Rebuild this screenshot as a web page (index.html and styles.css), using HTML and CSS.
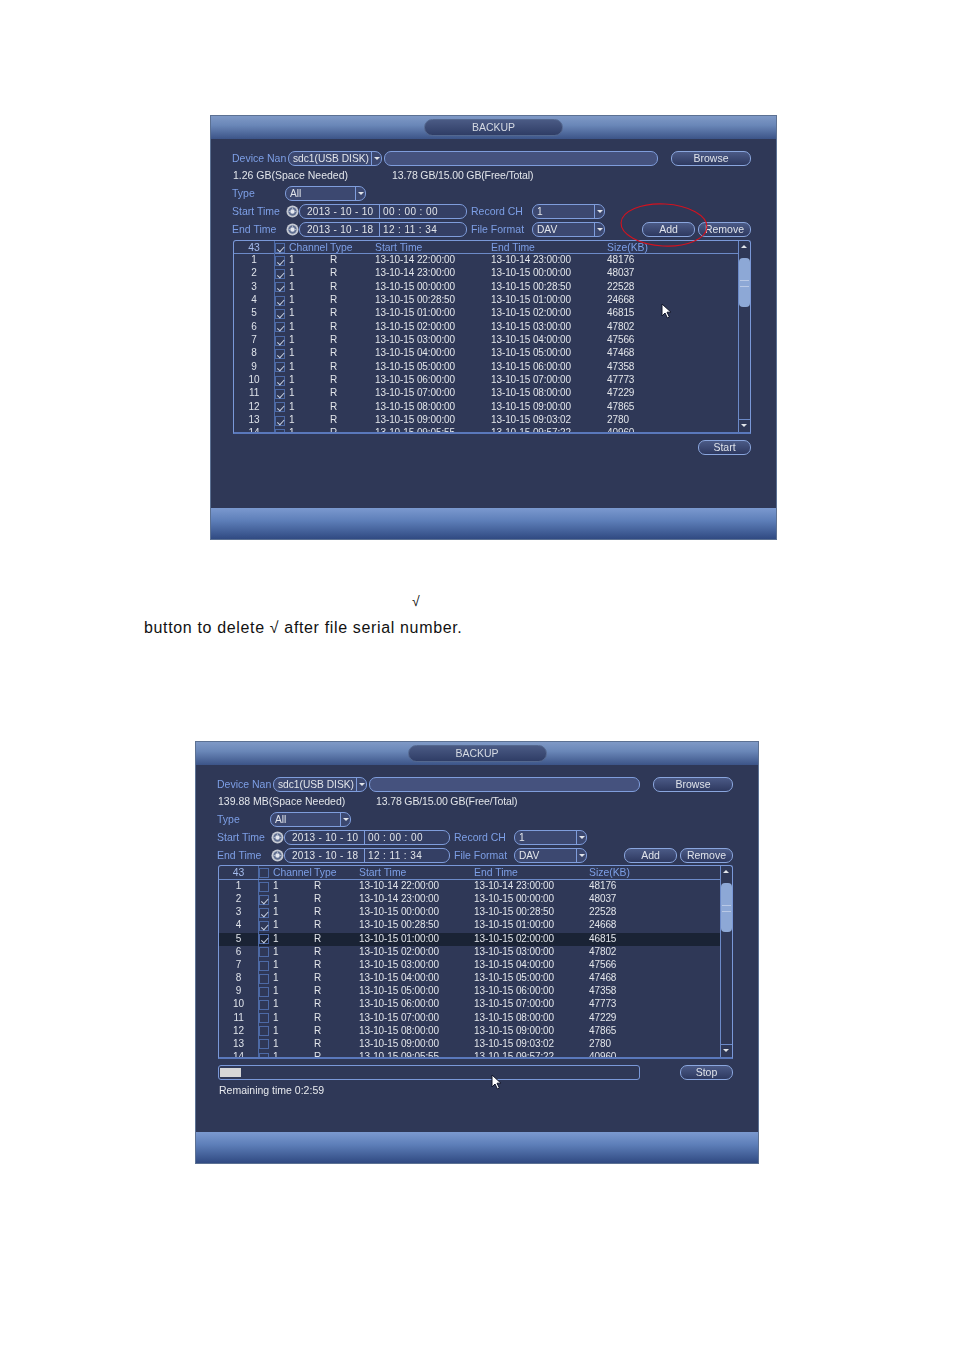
FILE: index.html
```html
<!DOCTYPE html>
<html lang="en">
<head>
<meta charset="UTF-8" />
<title>Backup</title>
<link rel="stylesheet" href="styles.css">
</head>
<body>

<section class="dialog dialog-add">
  <header class="title-bar"><span class="title-pill">BACKUP</span></header>
  <div class="panel">
    <div class="row">
      <span class="label label-device">Device Nan</span>
      <span class="field select select-device"><span class="value">sdc1(USB DISK)</span><i class="drop"></i></span>
      <span class="field path"></span>
      <button class="btn btn-browse">Browse</button>
    </div>
    <div class="row row-info">
      <span class="info-needed">1.26 GB(Space Needed)</span>
      <span class="info-free">13.78 GB/15.00 GB(Free/Total)</span>
    </div>
    <div class="row">
      <span class="label label-type">Type</span>
      <span class="field select select-type"><span class="value">All</span><i class="drop"></i></span>
    </div>
    <div class="row">
      <span class="label label-time">Start Time</span>
      <svg class="clock" width="13" height="13" viewBox="0 0 13 13"><circle cx="6.500" cy="6.500" r="6" fill="#c6cad3"/><circle cx="6.500" cy="6.500" r="4.200" fill="#5f6e90"/><circle cx="6.500" cy="6.500" r="2.200" fill="#e4e7ee"/><path d="M6.500 2.500v2M2.500 6.500h2M10.500 6.500h-2" stroke="#a9b2c6"/></svg>
      <span class="field datetime"><span class="date">2013 - 10 - 10</span><span class="time">00 : 00 : 00</span></span>
      <span class="label label-record">Record CH</span>
      <span class="field select select-record"><span class="value">1</span><i class="drop"></i></span>
    </div>
    <div class="row">
      <span class="label label-time">End Time</span>
      <svg class="clock" width="13" height="13" viewBox="0 0 13 13"><circle cx="6.500" cy="6.500" r="6" fill="#c6cad3"/><circle cx="6.500" cy="6.500" r="4.200" fill="#5f6e90"/><circle cx="6.500" cy="6.500" r="2.200" fill="#e4e7ee"/><path d="M6.500 2.500v2M2.500 6.500h2M10.500 6.500h-2" stroke="#a9b2c6"/></svg>
      <span class="field datetime"><span class="date">2013 - 10 - 18</span><span class="time">12 : 11 : 34</span></span>
      <span class="label label-record">File Format</span>
      <span class="field select select-record"><span class="value">DAV</span><i class="drop"></i></span>
      <button class="btn btn-add">Add</button>
      <button class="btn btn-remove">Remove</button>
    </div>

    <div class="file-table">
      <div class="file-list">
        <div class="file-row file-head"><span class="num">43</span><span class="tick"><i class="check on"></i></span><span>Channel</span><span class="type">Type</span><span>Start Time</span><span>End Time</span><span>Size(KB)</span></div>
        <div class="file-row"><span class="num">1</span><span class="tick"><i class="check on"></i></span><span>1</span><span class="type">R</span><span>13-10-14 22:00:00</span><span>13-10-14 23:00:00</span><span>48176</span></div>
        <div class="file-row"><span class="num">2</span><span class="tick"><i class="check on"></i></span><span>1</span><span class="type">R</span><span>13-10-14 23:00:00</span><span>13-10-15 00:00:00</span><span>48037</span></div>
        <div class="file-row"><span class="num">3</span><span class="tick"><i class="check on"></i></span><span>1</span><span class="type">R</span><span>13-10-15 00:00:00</span><span>13-10-15 00:28:50</span><span>22528</span></div>
        <div class="file-row"><span class="num">4</span><span class="tick"><i class="check on"></i></span><span>1</span><span class="type">R</span><span>13-10-15 00:28:50</span><span>13-10-15 01:00:00</span><span>24668</span></div>
        <div class="file-row"><span class="num">5</span><span class="tick"><i class="check on"></i></span><span>1</span><span class="type">R</span><span>13-10-15 01:00:00</span><span>13-10-15 02:00:00</span><span>46815</span></div>
        <div class="file-row"><span class="num">6</span><span class="tick"><i class="check on"></i></span><span>1</span><span class="type">R</span><span>13-10-15 02:00:00</span><span>13-10-15 03:00:00</span><span>47802</span></div>
        <div class="file-row"><span class="num">7</span><span class="tick"><i class="check on"></i></span><span>1</span><span class="type">R</span><span>13-10-15 03:00:00</span><span>13-10-15 04:00:00</span><span>47566</span></div>
        <div class="file-row"><span class="num">8</span><span class="tick"><i class="check on"></i></span><span>1</span><span class="type">R</span><span>13-10-15 04:00:00</span><span>13-10-15 05:00:00</span><span>47468</span></div>
        <div class="file-row"><span class="num">9</span><span class="tick"><i class="check on"></i></span><span>1</span><span class="type">R</span><span>13-10-15 05:00:00</span><span>13-10-15 06:00:00</span><span>47358</span></div>
        <div class="file-row"><span class="num">10</span><span class="tick"><i class="check on"></i></span><span>1</span><span class="type">R</span><span>13-10-15 06:00:00</span><span>13-10-15 07:00:00</span><span>47773</span></div>
        <div class="file-row"><span class="num">11</span><span class="tick"><i class="check on"></i></span><span>1</span><span class="type">R</span><span>13-10-15 07:00:00</span><span>13-10-15 08:00:00</span><span>47229</span></div>
        <div class="file-row"><span class="num">12</span><span class="tick"><i class="check on"></i></span><span>1</span><span class="type">R</span><span>13-10-15 08:00:00</span><span>13-10-15 09:00:00</span><span>47865</span></div>
        <div class="file-row"><span class="num">13</span><span class="tick"><i class="check on"></i></span><span>1</span><span class="type">R</span><span>13-10-15 09:00:00</span><span>13-10-15 09:03:02</span><span>2780</span></div>
        <div class="file-row"><span class="num">14</span><span class="tick"><i class="check on"></i></span><span>1</span><span class="type">R</span><span>13-10-15 09:05:55</span><span>13-10-15 09:57:22</span><span>40960</span></div>
      </div>
      <div class="scrollbar">
        <span class="arrow arrow-up"></span>
        <div class="track"><div class="thumb"></div></div>
        <span class="arrow arrow-down"></span>
      </div>
    </div>

    <div class="row row-action">
      <button class="btn btn-action">Start</button>
    </div>
  </div>
  <footer class="foot-bar"></footer>

  <svg class="red-ring" width="92" height="48" viewBox="0 0 92 48"><ellipse cx="46" cy="24" rx="43" ry="21" transform="rotate(3 46 24)" fill="none" stroke="#d3121f" stroke-width="1.1"/></svg>
  <svg class="pointer" width="12" height="16" viewBox="0 0 12 16"><path d="M1 1v12l3-3 2.400 5 2-1-2.400-4.800h4z" fill="#fff" stroke="#10152a"/></svg>
</section>

<p class="doc-tick">√</p>
<p class="doc-line">button to delete √ after file serial number.</p>

<section class="dialog dialog-run">
  <header class="title-bar"><span class="title-pill">BACKUP</span></header>
  <div class="panel">
    <div class="row">
      <span class="label label-device">Device Nan</span>
      <span class="field select select-device"><span class="value">sdc1(USB DISK)</span><i class="drop"></i></span>
      <span class="field path"></span>
      <button class="btn btn-browse">Browse</button>
    </div>
    <div class="row row-info">
      <span class="info-needed">139.88 MB(Space Needed)</span>
      <span class="info-free">13.78 GB/15.00 GB(Free/Total)</span>
    </div>
    <div class="row">
      <span class="label label-type">Type</span>
      <span class="field select select-type"><span class="value">All</span><i class="drop"></i></span>
    </div>
    <div class="row">
      <span class="label label-time">Start Time</span>
      <svg class="clock" width="13" height="13" viewBox="0 0 13 13"><circle cx="6.500" cy="6.500" r="6" fill="#c6cad3"/><circle cx="6.500" cy="6.500" r="4.200" fill="#5f6e90"/><circle cx="6.500" cy="6.500" r="2.200" fill="#e4e7ee"/><path d="M6.500 2.500v2M2.500 6.500h2M10.500 6.500h-2" stroke="#a9b2c6"/></svg>
      <span class="field datetime"><span class="date">2013 - 10 - 10</span><span class="time">00 : 00 : 00</span></span>
      <span class="label label-record">Record CH</span>
      <span class="field select select-record"><span class="value">1</span><i class="drop"></i></span>
    </div>
    <div class="row">
      <span class="label label-time">End Time</span>
      <svg class="clock" width="13" height="13" viewBox="0 0 13 13"><circle cx="6.500" cy="6.500" r="6" fill="#c6cad3"/><circle cx="6.500" cy="6.500" r="4.200" fill="#5f6e90"/><circle cx="6.500" cy="6.500" r="2.200" fill="#e4e7ee"/><path d="M6.500 2.500v2M2.500 6.500h2M10.500 6.500h-2" stroke="#a9b2c6"/></svg>
      <span class="field datetime"><span class="date">2013 - 10 - 18</span><span class="time">12 : 11 : 34</span></span>
      <span class="label label-record">File Format</span>
      <span class="field select select-record"><span class="value">DAV</span><i class="drop"></i></span>
      <button class="btn btn-add">Add</button>
      <button class="btn btn-remove">Remove</button>
    </div>

    <div class="file-table">
      <div class="file-list">
        <div class="file-row file-head"><span class="num">43</span><span class="tick"><i class="check"></i></span><span>Channel</span><span class="type">Type</span><span>Start Time</span><span>End Time</span><span>Size(KB)</span></div>
        <div class="file-row"><span class="num">1</span><span class="tick"><i class="check"></i></span><span>1</span><span class="type">R</span><span>13-10-14 22:00:00</span><span>13-10-14 23:00:00</span><span>48176</span></div>
        <div class="file-row"><span class="num">2</span><span class="tick"><i class="check on"></i></span><span>1</span><span class="type">R</span><span>13-10-14 23:00:00</span><span>13-10-15 00:00:00</span><span>48037</span></div>
        <div class="file-row"><span class="num">3</span><span class="tick"><i class="check on"></i></span><span>1</span><span class="type">R</span><span>13-10-15 00:00:00</span><span>13-10-15 00:28:50</span><span>22528</span></div>
        <div class="file-row"><span class="num">4</span><span class="tick"><i class="check on"></i></span><span>1</span><span class="type">R</span><span>13-10-15 00:28:50</span><span>13-10-15 01:00:00</span><span>24668</span></div>
        <div class="file-row selected"><span class="num">5</span><span class="tick"><i class="check on"></i></span><span>1</span><span class="type">R</span><span>13-10-15 01:00:00</span><span>13-10-15 02:00:00</span><span>46815</span></div>
        <div class="file-row"><span class="num">6</span><span class="tick"><i class="check"></i></span><span>1</span><span class="type">R</span><span>13-10-15 02:00:00</span><span>13-10-15 03:00:00</span><span>47802</span></div>
        <div class="file-row"><span class="num">7</span><span class="tick"><i class="check"></i></span><span>1</span><span class="type">R</span><span>13-10-15 03:00:00</span><span>13-10-15 04:00:00</span><span>47566</span></div>
        <div class="file-row"><span class="num">8</span><span class="tick"><i class="check"></i></span><span>1</span><span class="type">R</span><span>13-10-15 04:00:00</span><span>13-10-15 05:00:00</span><span>47468</span></div>
        <div class="file-row"><span class="num">9</span><span class="tick"><i class="check"></i></span><span>1</span><span class="type">R</span><span>13-10-15 05:00:00</span><span>13-10-15 06:00:00</span><span>47358</span></div>
        <div class="file-row"><span class="num">10</span><span class="tick"><i class="check"></i></span><span>1</span><span class="type">R</span><span>13-10-15 06:00:00</span><span>13-10-15 07:00:00</span><span>47773</span></div>
        <div class="file-row"><span class="num">11</span><span class="tick"><i class="check"></i></span><span>1</span><span class="type">R</span><span>13-10-15 07:00:00</span><span>13-10-15 08:00:00</span><span>47229</span></div>
        <div class="file-row"><span class="num">12</span><span class="tick"><i class="check"></i></span><span>1</span><span class="type">R</span><span>13-10-15 08:00:00</span><span>13-10-15 09:00:00</span><span>47865</span></div>
        <div class="file-row"><span class="num">13</span><span class="tick"><i class="check"></i></span><span>1</span><span class="type">R</span><span>13-10-15 09:00:00</span><span>13-10-15 09:03:02</span><span>2780</span></div>
        <div class="file-row"><span class="num">14</span><span class="tick"><i class="check"></i></span><span>1</span><span class="type">R</span><span>13-10-15 09:05:55</span><span>13-10-15 09:57:22</span><span>40960</span></div>
      </div>
      <div class="scrollbar">
        <span class="arrow arrow-up"></span>
        <div class="track"><div class="thumb"></div></div>
        <span class="arrow arrow-down"></span>
      </div>
    </div>

    <div class="row row-action">
      <div class="progress"><div class="progress-fill"></div></div>
      <button class="btn btn-action">Stop</button>
    </div>
    <div class="remaining">Remaining time 0:2:59</div>
  </div>
  <footer class="foot-bar"></footer>

  <svg class="pointer" width="12" height="16" viewBox="0 0 12 16"><path d="M1 1v12l3-3 2.400 5 2-1-2.400-4.800h4z" fill="#fff" stroke="#10152a"/></svg>
</section>

</body>
</html>
```

FILE: styles.css
```css
* {
  box-sizing: border-box;
}
body {
  margin: 0;
  background: #fff;
  color: #111;
  font-family: "Liberation Sans", Arial, sans-serif;
}
.dialog {
  position: relative;
  display: flex;
  flex-direction: column;
  border: 1px solid #5c7193;
  background: #2f3857;
  color: #e2e5ea;
  font-size: 10.5px;
  filter: blur(0.3px);
}
.dialog-add {
  width: 567px;
  height: 425px;
  margin: 115px 0 0 210px;
  --columns: 40px 15px 31px 55px 116px 116px 1fr;
  --row-height: 13.33px;
  --head-height: 13px;
  --label-lift: 2px;
}
.dialog-run {
  width: 564px;
  height: 423px;
  margin: 0 0 0 195px;
  --columns: 39px 15px 31px 55px 115px 115px 1fr;
  --row-height: 13.17px;
  --head-height: 14px;
  --label-lift: 1px;
}
.title-bar {
  flex: none;
  height: 23px;
  display: flex;
  justify-content: center;
  align-items: center;
  background: linear-gradient(#7f99c6, #6a87b8 40%, #3c5488);
}
.title-pill {
  width: 139px;
  height: 17px;
  margin-top: -1px;
  border-radius: 9px;
  background: linear-gradient(#4a5a84, #2f3d66);
  border: 1px solid #54688f;
  color: #d5dae3;
  line-height: 15px;
  text-align: center;
}
.foot-bar {
  flex: none;
  height: 31px;
  background: linear-gradient(#7b99cf, #5e7fb9 40%, #304a82);
}
.panel {
  flex: 1;
  display: flex;
  flex-direction: column;
  gap: 3px;
  padding: 12px 25px 0 21px;
}
.row {
  display: flex;
  align-items: center;
  height: 15px;
  flex: none;
  white-space: nowrap;
}
.row-info {
  margin: -2px 0 1px;
  padding-left: 1px;
}
.info-needed {
  width: 159px;
}
.dialog-run .info-needed {
  width: 158px;
}
.info-free {
  letter-spacing: -0.14px;
}
.label {
  color: #7d9fe6;
  flex: none;
  margin-bottom: var(--label-lift);
}
.label-device {
  width: 56px;
}
.label-type {
  width: 53px;
}
.label-time {
  width: 54px;
}
.label-record {
  width: 61px;
  margin-left: 4px;
}
.dialog-run .label-record {
  width: 60px;
}
.field {
  flex: none;
  display: flex;
  align-items: center;
  height: 15px;
  border: 1px solid #7f9ddc;
  border-radius: 7px;
  background: #3c4870;
}
.select .value {
  flex: 1;
  padding-left: 4px;
  overflow: hidden;
  font-size: 10.2px;
}
.drop {
  position: relative;
  flex: none;
  width: 10px;
  height: 13px;
  border-left: 1px solid #7f9ddc;
}
.drop::after {
  content: "";
  position: absolute;
  left: 2px;
  top: 5px;
  border: 3px solid transparent;
  border-top-color: #e2e5ea;
  border-bottom: 0;
}
.select-device {
  width: 94px;
}
.select-type {
  width: 81px;
}
.select-record {
  width: 73px;
}
.path {
  flex: 1;
  margin: 0 13px 0 2px;
  background: #45527e;
}
.clock {
  flex: none;
}
.datetime {
  width: 168px;
  background: #343f64;
}
.dialog-run .datetime {
  width: 166px;
}
.date {
  width: 80px;
  height: 13px;
  padding-left: 7px;
  border-right: 1px solid #7f9ddc;
  font-size: 10px;
  line-height: 13px;
  letter-spacing: 0.3px;
}
.time {
  padding-left: 3px;
  font-size: 10px;
  letter-spacing: 0.4px;
}
.btn {
  flex: none;
  height: 15px;
  padding: 0;
  border: 1px solid #8aa6de;
  border-radius: 7px;
  background: linear-gradient(#4b5a86, #2e3960);
  color: #dfe3ea;
  font: 10.5px "Liberation Sans", Arial, sans-serif;
  line-height: 13px;
}
.btn-browse {
  width: 80px;
}
.btn-add {
  width: 53px;
  margin-left: auto;
}
.btn-remove {
  width: 53px;
  margin-left: 3px;
}
.btn-action {
  width: 53px;
  margin-left: auto;
}
.file-table {
  flex: none;
  display: flex;
  height: 194px;
  margin-left: 1px;
  border: 1px solid #7a98d8;
  border-radius: 3px 3px 0 0;
  border-bottom-width: 2px;
  border-bottom-color: #5a78bb;
  font-size: 10px;
  letter-spacing: -0.1px;
}
.dialog-run .file-table {
  margin-top: -1px;
}
.file-list {
  flex: 1;
  overflow: hidden;
}
.file-row {
  display: grid;
  grid-template-columns: var(--columns);
  align-items: start;
  height: var(--row-height);
  line-height: 12.5px;
  white-space: nowrap;
}
.file-row.selected {
  background: #1a2335;
}
.file-head {
  align-items: center;
  height: var(--head-height);
  border-bottom: 1px solid #6c8ac8;
  color: #7d9fe6;
  font-size: 10.4px;
  line-height: 13px;
  letter-spacing: 0;
}
.num {
  text-align: center;
  color: #dfe3ea;
}
.file-head .num {
  color: #a4bbec;
}
.tick {
  align-self: stretch;
  display: flex;
  align-items: center;
  border-left: 1px solid #4d6aa6;
}
.check {
  position: relative;
  width: 10px;
  height: 10px;
  border: 1px solid #4d6aa6;
}
.check.on::after {
  content: "";
  position: absolute;
  left: 3px;
  top: 1px;
  width: 2.500px;
  height: 5.500px;
  border-right: 0.8px solid #c9d1e2;
  border-bottom: 0.8px solid #c9d1e2;
  transform: rotate(42deg);
}
.type {
  padding-left: 10px;
}
.scrollbar {
  flex: none;
  width: 12px;
  display: flex;
  flex-direction: column;
  border-left: 1px solid #6c8ac8;
}
.arrow {
  position: relative;
  flex: none;
  height: 13px;
}
.arrow-down {
  border-top: 1px solid #6c8ac8;
}
.arrow::after {
  content: "";
  position: absolute;
  left: 2px;
  top: 4px;
  border: 3px solid transparent;
}
.arrow-up::after {
  border-top: 0;
  border-bottom-color: #e2e5ea;
}
.arrow-down::after {
  border-bottom: 0;
  border-top-color: #e2e5ea;
}
.track {
  flex: 1;
  padding-top: 4px;
}
.thumb {
  position: relative;
  height: 49px;
  border-radius: 4px;
  background: #8da8d6;
}
.thumb::after {
  content: "";
  position: absolute;
  left: 1px;
  right: 1px;
  top: 22px;
  height: 5px;
  border-top: 1px solid #b9c9e6;
  border-bottom: 1px solid #b9c9e6;
}
.row-action {
  margin-top: 3px;
}
.progress {
  flex: none;
  width: 422px;
  height: 15px;
  margin-left: 1px;
  padding: 2px 1px;
  border: 1px solid #7a98d8;
  border-radius: 3px;
}
.progress-fill {
  width: 21px;
  height: 100%;
  background: #d6d6d6;
}
.remaining {
  padding: 0 0 0 2px;
  margin-top: 1px;
  color: #e8eaee;
}
.red-ring {
  position: absolute;
  left: 407px;
  top: 85px;
}
.pointer {
  position: absolute;
}
.dialog-add .pointer {
  left: 450px;
  top: 187px;
}
.dialog-run .pointer {
  left: 295px;
  top: 332px;
}
.doc-tick {
  margin: 52px 0 0 412px;
  height: 18px;
  font-size: 14px;
  line-height: 18px;
}
.doc-line {
  margin: 9px 0 104px 144px;
  height: 18px;
  font-size: 16px;
  line-height: 18px;
  letter-spacing: 0.65px;
  white-space: nowrap;
}
```
